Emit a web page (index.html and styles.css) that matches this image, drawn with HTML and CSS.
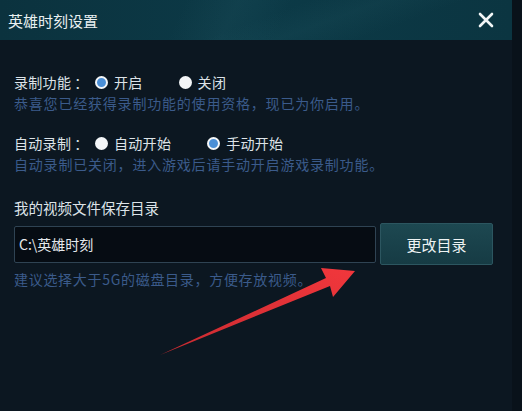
FILE: index.html
```html
<!DOCTYPE html>
<html lang="zh">
<head>
<meta charset="utf-8">
<title>英雄时刻设置</title>
<link rel="stylesheet" href="styles.css">
</head>
<body>
<div class="dialog">
  <div class="header">
    <span class="title">英雄时刻设置</span>
    <svg class="close" width="16" height="16" viewBox="0 0 16 16"><path d="M2 2 L14 14 M14 2 L2 14" stroke="#f2f6f7" stroke-width="2.6" stroke-linecap="round"/></svg>
  </div>
  <div class="content">
    <div class="row first">
      <span class="label">录制功能<span class="colon">：</span></span>
      <span class="option"><span class="radio on"></span>开启</span>
      <span class="option"><span class="radio"></span>关闭</span>
    </div>
    <div class="hint">恭喜您已经获得录制功能的使用资格，现已为你启用。</div>
    <div class="row second">
      <span class="label">自动录制<span class="colon">：</span></span>
      <span class="option"><span class="radio"></span>自动开始</span>
      <span class="option"><span class="radio on"></span>手动开始</span>
    </div>
    <div class="hint">自动录制已关闭，进入游戏后请手动开启游戏录制功能。</div>
    <div class="dir-label">我的视频文件保存目录</div>
    <div class="dir-row">
      <div class="path">C:\英雄时刻</div>
      <div class="btn">更改目录</div>
    </div>
    <div class="hint small">建议选择大于5G的磁盘目录，方便存放视频。</div>
  </div>
  <svg class="arrow" width="522" height="411" viewBox="0 0 522 411">
    <defs>
      <linearGradient id="ag" x1="0" y1="1" x2="1" y2="0">
        <stop offset="0" stop-color="#c92a30"/>
        <stop offset="1" stop-color="#f2373c"/>
      </linearGradient>
    </defs>
    <polygon points="355,271 321,268 326,278 160,355 330,286 333,297" fill="url(#ag)"/>
  </svg>
</div>
</body>
</html>
```
FILE: styles.css
```css
html, body {
  margin: 0;
  padding: 0;
}
body {
  width: 522px;
  height: 411px;
  background: #09121a;
  font-family: "Noto Sans CJK SC", "Microsoft YaHei", sans-serif;
  overflow: hidden;
}
.dialog {
  position: relative;
  width: 512px;
  height: 411px;
  background: #0c1721;
}
.header {
  height: 40px;
  display: flex;
  align-items: center;
  justify-content: space-between;
  padding: 0 18px 0 8px;
  background:
    linear-gradient(115deg, rgba(255,255,255,0) 35%, rgba(60,120,130,0.10) 45%, rgba(255,255,255,0) 55%),
    linear-gradient(160deg, rgba(255,255,255,0) 50%, rgba(50,110,120,0.10) 62%, rgba(255,255,255,0) 75%),
    linear-gradient(90deg, #0b323e, #0c3a47 50%, #0b3541);
  box-sizing: border-box;
}
.title {
  color: #e9f0f1;
  font-size: 15px;
  line-height: 20px;
  margin-top: 2px;
}
.close {
  display: block;
}
.content {
  padding: 0 14px;
}
.row {
  display: flex;
  align-items: center;
  height: 20px;
  font-size: 14px;
  line-height: 20px;
  color: #dde3e8;
}
.row.first {
  margin-top: 32px;
}
.row.second {
  margin-top: 20px;
}
.label {
  width: 81px;
  letter-spacing: 0.3px;
}
.colon {
  padding-left: 3px;
}
.option {
  display: flex;
  align-items: center;
  margin-right: 36px;
  letter-spacing: 0.3px;
}
.radio {
  width: 13px;
  height: 13px;
  border-radius: 50%;
  background: #f4f6f8;
  margin-right: 6px;
  box-sizing: border-box;
}
.radio.on {
  background: #4b8fd6;
  border: 2px solid #f4f6f8;
}
.hint {
  font-size: 14px;
  line-height: 20px;
  height: 20px;
  margin-top: 1px;
  color: #3b5b8b;
  letter-spacing: 0.8px;
}
.dir-label {
  margin-top: 24px;
  font-size: 14.5px;
  line-height: 20px;
  color: #dde3e8;
}
.dir-row {
  display: flex;
  align-items: center;
  margin-top: 5px;
  height: 42px;
}
.path {
  width: 362px;
  height: 37px;
  box-sizing: border-box;
  border: 1px solid #2f4353;
  border-radius: 2px;
  background: #060c13;
  color: #e4e8ec;
  font-size: 14px;
  line-height: 35px;
  padding-left: 4px;
}
.btn {
  margin-left: 4px;
  width: 113px;
  height: 42px;
  box-sizing: border-box;
  border: 1px solid #2c5660;
  border-radius: 2px;
  background: linear-gradient(180deg, #1d4851, #163b44);
  color: #eef3f3;
  font-size: 15px;
  display: flex;
  align-items: center;
  justify-content: center;
}
.hint.small {
  margin-top: 4px;
  letter-spacing: 0.7px;
}
.arrow {
  position: absolute;
  left: 0;
  top: 0;
  pointer-events: none;
}
```
